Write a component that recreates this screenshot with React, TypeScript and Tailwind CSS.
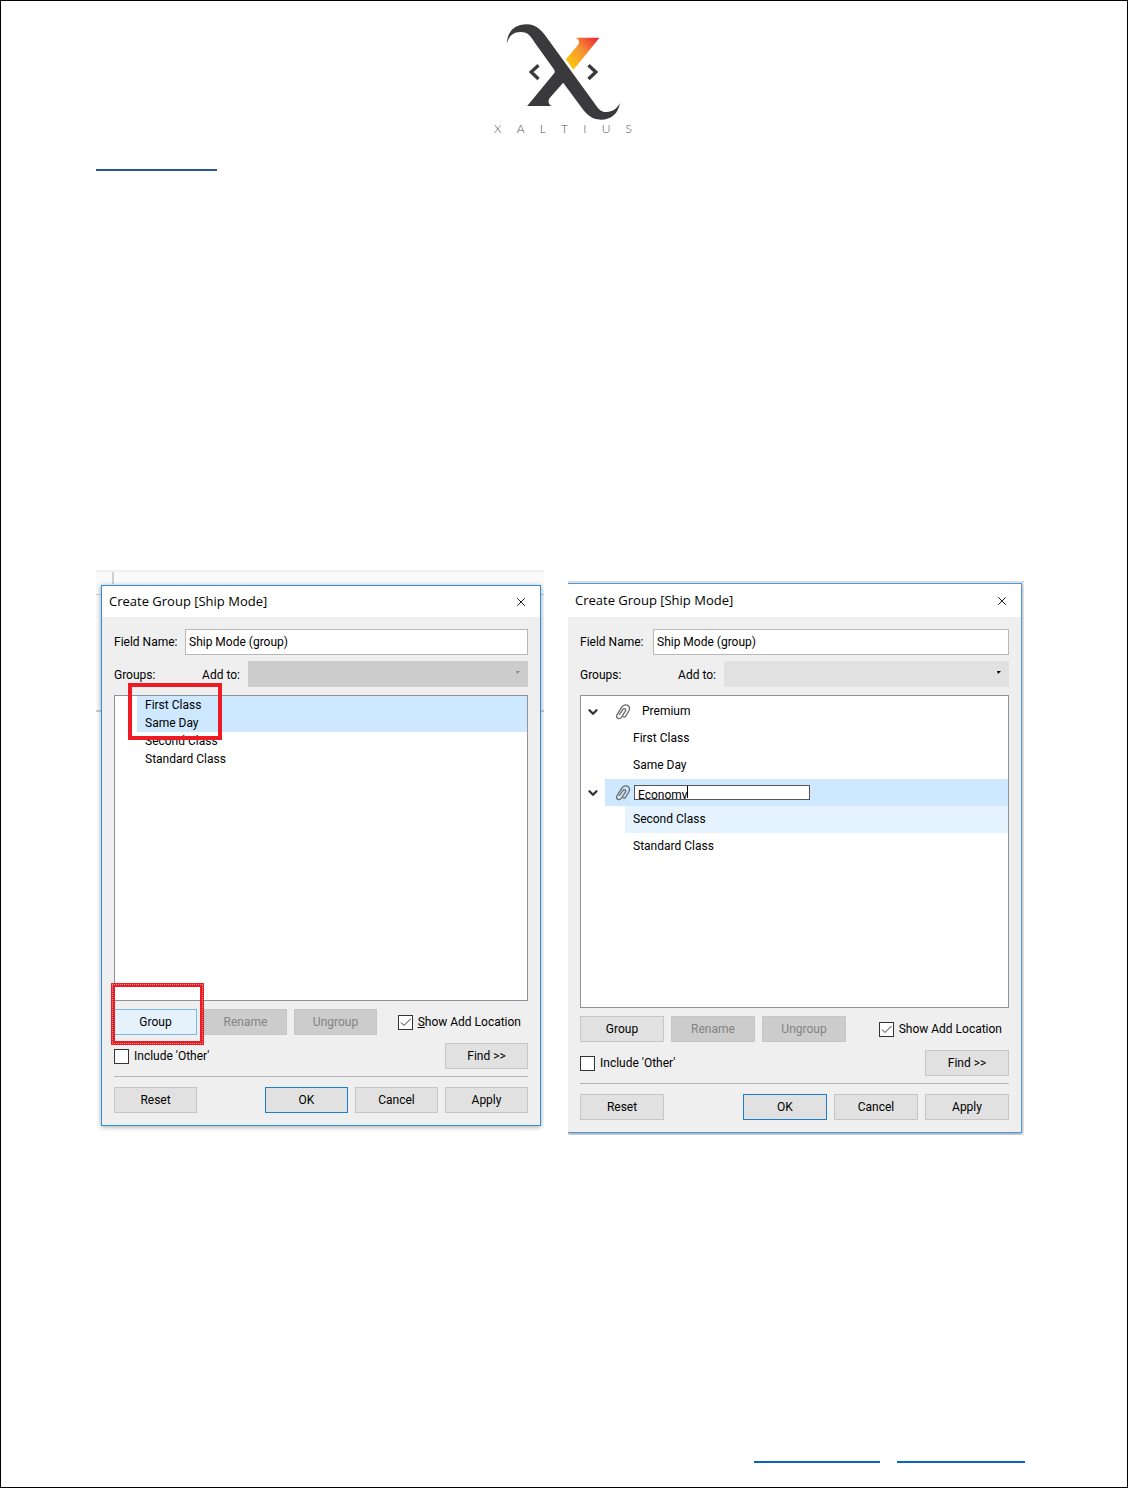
import type { ReactNode } from 'react';
import { ChevronDown, X } from 'lucide-react';
import { clsx } from 'clsx';

type ButtonTone = 'normal' | 'primary' | 'hover' | 'disabled';

const toneClass: Record<ButtonTone, string> = {
  normal: 'border-[#c6c6c6] bg-[#e1e1e1] text-black',
  primary: 'border-[#1a7fd4] bg-[#e1e1e1] text-black',
  hover: 'border-[#7ab8ea] bg-[#e5f1fb] text-black',
  disabled: 'border-[#c6c6c6] bg-[#cccccc] text-[#838383]',
};

interface DialogButtonProps {
  tone?: ButtonTone;
  className: string;
  children: ReactNode;
}

function DialogButton({ tone = 'normal', className, children }: DialogButtonProps) {
  return (
    <button
      type="button"
      disabled={tone === 'disabled'}
      className={clsx('h-[26px] shrink-0 border text-center', className, toneClass[tone])}
    >
      {children}
    </button>
  );
}

function CheckBox({ id, checked, children }: { id: string; checked?: boolean; children: ReactNode }) {
  return (
    <div className="flex items-center gap-[5px]">
      <div className="grid size-[15px] shrink-0">
        <input
          id={id}
          type="checkbox"
          defaultChecked={checked}
          className="peer col-start-1 row-start-1 size-[15px] appearance-none border border-[#333333] bg-white"
        />
        <svg
          viewBox="0 0 15 15"
          className="pointer-events-none invisible col-start-1 row-start-1 size-[15px] peer-checked:visible"
          fill="none"
          stroke="#333333"
          aria-hidden="true"
        >
          <path d="M3 7.5 6 10.5 12.5 4" />
        </svg>
      </div>
      <label htmlFor={id} className="whitespace-nowrap">
        {children}
      </label>
    </div>
  );
}

function PaperclipIcon() {
  return (
    <svg
      viewBox="0 0 16 16"
      className="size-4 shrink-0"
      fill="none"
      stroke="#6b6b6b"
      strokeWidth="1.3"
      strokeLinecap="round"
      aria-hidden="true"
    >
      <path d="M4.500 10.500 7.800 5.600C9 3.800 11.500 5 10.400 7.200L6.500 13.200C4.500 16.200.4 14 2 10.800L6.300 3.800C8.500.2 12 .4 13.500 2C15 3.600 14.600 5.600 13.800 7L10.500 12.300C9.800 13.500 8.800 13.400 8.500 12.800" />
    </svg>
  );
}

interface DialogProps {
  id: string;
  frameClass: string;
  titleClass: string;
  nameLabelClass: string;
  groupsLabelClass: string;
  listClass: string;
  buttonClass: string;
  groupTone: ButtonTone;
  addToDisabled?: boolean;
  showLabel: ReactNode;
  groupMark?: ReactNode;
  children: ReactNode;
}

function CreateGroupDialog(props: DialogProps) {
  const { id, buttonClass } = props;
  return (
    <section
      aria-labelledby={`${id}-title`}
      className={clsx('relative font-["Roboto",sans-serif] text-xs text-black', props.frameClass)}
    >
      <header className={clsx('flex items-center justify-between bg-white pr-3 pl-[7px]', props.titleClass)}>
        <h2 id={`${id}-title`} className='font-["Open_Sans",sans-serif] text-[13px]'>
          Create Group [Ship Mode]
        </h2>
        <button type="button" aria-label="Close">
          <X className="size-[14px]" strokeWidth={1.5} />
        </button>
      </header>

      <div className="bg-[#efefef] p-3">
        <div className="flex items-center gap-2">
          <label htmlFor={`${id}-name`} className={clsx('shrink-0 whitespace-nowrap', props.nameLabelClass)}>
            Field Name:
          </label>
          <input
            id={`${id}-name`}
            type="text"
            defaultValue="Ship Mode (group)"
            className="h-[26px] min-w-0 flex-1 border border-[#b8b8b8] bg-white px-[3px]"
          />
        </div>

        <div className="mt-[6px] flex items-center gap-2">
          <div className={clsx('flex justify-between pt-[2px]', props.groupsLabelClass)}>
            <span>Groups:</span>
            <label htmlFor={`${id}-add`}>Add to:</label>
          </div>
          <div className="relative flex-1">
            <select
              id={`${id}-add`}
              disabled={props.addToDisabled}
              className={clsx(
                'block h-[26px] w-full appearance-none',
                props.addToDisabled ? 'bg-[#cccccc]' : 'bg-[#e1e1e1]',
              )}
            />
            <svg
              viewBox="0 0 4 4"
              className={clsx(
                'pointer-events-none absolute top-[10px] right-2 size-1',
                props.addToDisabled ? 'text-[#888888]' : 'text-black',
              )}
              aria-hidden="true"
            >
              <path d="M0 0h4L1 3z" fill="currentColor" />
            </svg>
          </div>
        </div>

        <div className={clsx('mt-2 border border-[#8d929b] bg-white', props.listClass)}>{props.children}</div>

        <div className="mt-2 flex items-center justify-between">
          <div className="flex gap-[7px]">
            <div className="relative">
              <DialogButton tone={props.groupTone} className={buttonClass}>
                Group
              </DialogButton>
              {props.groupMark}
            </div>
            <DialogButton tone="disabled" className={buttonClass}>
              Rename
            </DialogButton>
            <DialogButton tone="disabled" className={buttonClass}>
              Ungroup
            </DialogButton>
          </div>
          <div className="pr-[7px]">
            <CheckBox id={`${id}-show`} checked>
              {props.showLabel}
            </CheckBox>
          </div>
        </div>

        <div className="mt-2 flex items-center justify-between">
          <CheckBox id={`${id}-other`}>Include 'Other'</CheckBox>
          <DialogButton className={buttonClass}>Find &gt;&gt;</DialogButton>
        </div>

        <hr className="mt-[7px] mb-[10px] border-t border-[#b4b4b4]" />

        <div className="flex justify-between">
          <DialogButton className={buttonClass}>Reset</DialogButton>
          <div className="flex gap-[7px]">
            <DialogButton tone="primary" className={buttonClass}>
              OK
            </DialogButton>
            <DialogButton className={buttonClass}>Cancel</DialogButton>
            <DialogButton className={buttonClass}>Apply</DialogButton>
          </div>
        </div>
      </div>
    </section>
  );
}

function Logo() {
  return (
    <div className="w-[138px]">
      <svg viewBox="75 38 350 294" className="mx-auto h-[98px] w-[117px]" aria-hidden="true">
        <defs>
          <linearGradient id="flame" x1="265" y1="165" x2="350" y2="82" gradientUnits="userSpaceOnUse">
            <stop offset="0" stopColor="#fdc90a" />
            <stop offset=".5" stopColor="#f79432" />
            <stop offset="1" stopColor="#ec2638" />
          </linearGradient>
        </defs>
        <path
          fill="#3a3a3c"
          d="M80 100C81 62 106 42 140 42C167 42 184 60 198 79L344 280C352 291 360 305 378 305C398 305 412 293 419 278C415 310 393 328 362 328C335 328 320 312 308 297L249 217L208 264C203 272 204 282 214 287H141L222 189C225 185 224 181 221 177L163 96C153 80 145 65 121 65C98 65 86 78 80 100Z"
        />
        <path fill="url(#flame)" d="M287 82H358L280 178L257 147L291 107C300 97 298 87 287 82Z" />
        <path d="M175 165 153 185 175 206M325 165 347 185 325 206" fill="none" stroke="#3a3a3c" strokeWidth="10" />
      </svg>
      <p className='flex justify-between font-["Lato",sans-serif] text-xs leading-4 font-light text-[#555555]'>
        {[...'XALTIUS'].map((letter, i) => (
          <span key={i}>{letter}</span>
        ))}
      </p>
    </div>
  );
}

function ShipModeList() {
  return (
    <ul className="leading-[18px]">
      <li className="ml-[22px] bg-[#cde8ff] pl-2">First Class</li>
      <li className="ml-[22px] bg-[#cde8ff] pl-2">Same Day</li>
      <li className="ml-[22px] pl-2">Second Class</li>
      <li className="ml-[22px] pl-2">Standard Class</li>
    </ul>
  );
}

function GroupedList() {
  return (
    <ul className="pt-[2px] leading-[27px]">
      <li>
        <div className="flex items-center">
          <ChevronDown className="mx-[5px] size-[14px]" strokeWidth={4} color="#333333" />
          <div className="flex flex-1 items-center gap-[11px] pl-[10px]">
            <PaperclipIcon />
            Premium
          </div>
        </div>
        <ul>
          <li className="ml-11 pl-2">First Class</li>
          <li className="ml-11 pl-2">Same Day</li>
        </ul>
      </li>
      <li>
        <div className="flex items-center">
          <ChevronDown className="mx-[5px] size-[14px]" strokeWidth={4} color="#333333" />
          <div className="flex h-[27px] flex-1 items-center gap-[3px] bg-[#cde8ff] pl-[10px]">
            <PaperclipIcon />
            <span className="relative flex">
              <input
                type="text"
                aria-label="Group name"
                defaultValue="Economy"
                className="h-[15px] w-[176px] border border-[#555555] bg-white px-[3px] pt-[4px] leading-3"
              />
              <span className="absolute top-px left-[53px] h-3 w-px bg-black" aria-hidden="true" />
            </span>
          </div>
        </div>
        <ul>
          <li className="ml-11 bg-[#e5f3ff] pl-2">Second Class</li>
          <li className="ml-11 pl-2">Standard Class</li>
        </ul>
      </li>
    </ul>
  );
}

export default function App() {
  return (
    <main className="flex min-h-screen flex-col border border-black bg-white pr-[102px] pl-[95px]">
      <header className="flex justify-center pt-[22px] pl-[5px]">
        <Logo />
      </header>
      <a href="#top" aria-label="Xaltius" className="mt-3 block h-[22px] w-[121px] border-b-2 border-[#2f5496]" />

      <div className="mt-[399px] grid grid-cols-[448fr_456fr] items-start gap-6 pr-px">
        {/* Window over a sliver of the worksheet behind it */}
        <div className="relative overflow-hidden bg-white pt-[15px] pr-[3px] pb-[10px] pl-[5px]">
          <div
            className="absolute inset-x-0 top-0 h-[142px] border-y-2 border-t-[#f0f0f0] border-b-[#cccccc] bg-[#fafafa]"
            aria-hidden="true"
          >
            <div className="ml-4 h-3 w-[2px] bg-[#d0d0d0]" />
            <div className="mt-[10px] h-px bg-[#cccccc]" />
          </div>
          <CreateGroupDialog
            id="before"
            frameClass="border border-[#2f8fdf] shadow-[0_1px_5px_rgba(0,0,0,0.35)]"
            titleClass="h-[31px]"
            nameLabelClass="w-[63px]"
            groupsLabelClass="w-[126px]"
            listClass="h-[306px]"
            buttonClass="w-[83px]"
            groupTone="hover"
            addToDisabled
            showLabel={
              <>
                <u>S</u>how Add Location
              </>
            }
            groupMark={
              <div
                className="pointer-events-none absolute -top-[26px] -left-[3px] h-[62px] w-[93px] border-4 border-[#ed1c24]"
                aria-hidden="true"
              >
                <div className="absolute -inset-[3px] border border-dotted border-[#dd9999]" />
              </div>
            }
          >
            <div className="relative">
              <ShipModeList />
              <div
                className="pointer-events-none absolute -top-[13px] left-[13px] h-[57px] w-[94px] border-4 border-[#ed1c24]"
                aria-hidden="true"
              />
            </div>
          </CreateGroupDialog>
        </div>

        <div className="mt-[11px] overflow-hidden border-t-2 border-[#dddddd] bg-[#f0f0f0] pr-[2px] pb-[2px]">
          <CreateGroupDialog
            id="after"
            frameClass="border border-l-0 border-[#4a9be0] shadow-[0_1px_3px_rgba(0,0,0,0.4)]"
            titleClass="h-[33px]"
            nameLabelClass="w-[65px]"
            groupsLabelClass="w-[136px]"
            listClass="h-[313px]"
            buttonClass="w-[84px]"
            groupTone="normal"
            showLabel="Show Add Location"
          >
            <GroupedList />
          </CreateGroupDialog>
        </div>
      </div>

      <footer className="mt-auto flex justify-end gap-[17px] pb-6">
        <a href="#mail" aria-label="Email" className="h-5 w-[126px] border-b-2 border-[#0563c1]" />
        <a href="#site" aria-label="Website" className="h-5 w-[128px] border-b-2 border-[#0563c1]" />
      </footer>
    </main>
  );
}
